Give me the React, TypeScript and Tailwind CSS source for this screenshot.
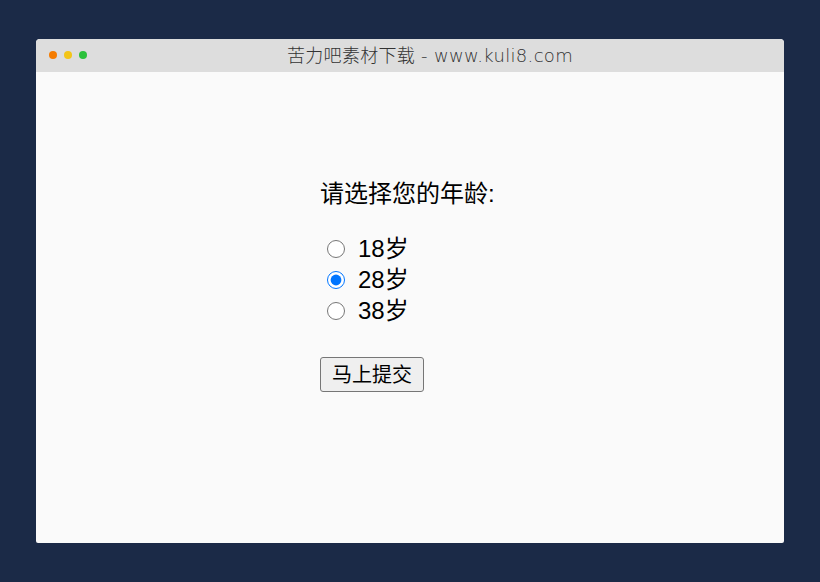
import { useState } from "react";

const ages = ["18岁", "28岁", "38岁"];

export default function App() {
  const [age, setAge] = useState("28岁");

  return (
    <div className="w-[820px] h-[582px] bg-[#1b2a47] pt-[39px] pl-[36px] font-['Liberation_Sans','Noto_Sans_CJK_SC',sans-serif]">
      <div className="w-[748px] h-[504px] bg-[#fafafa] rounded-t-[4px] rounded-b-[2px] overflow-hidden flex flex-col">
        <div className="h-[33px] bg-[#dddddd] flex items-center relative shrink-0">
          <div className="absolute left-[13px] top-[12px] flex gap-[7px]">
            <span className="w-[8px] h-[8px] rounded-full bg-[#f57c00]" />
            <span className="w-[8px] h-[8px] rounded-full bg-[#f3c518]" />
            <span className="w-[8px] h-[8px] rounded-full bg-[#2bc13b]" />
          </div>
          <div className="flex-1 text-center pl-[40px] text-[18px] tracking-[0.3px] font-extralight text-[#333] leading-none font-['DejaVu_Sans','Noto_Sans_CJK_SC',sans-serif]">
            苦力吧素材下载 - www.kuli8.com
          </div>
        </div>

        <div className="pt-[107px] pl-[284px] text-black">
          <form onSubmit={(e) => e.preventDefault()}>
            <div className="text-[24px] leading-[30px]">请选择您的年龄:</div>
            <div className="mt-[24px] flex flex-col">
              {ages.map((a) => (
                <label key={a} className="flex items-center h-[31px] text-[24px]">
                  <input
                    type="radio"
                    name="age"
                    checked={age === a}
                    onChange={() => setAge(a)}
                    className="w-[18px] h-[18px] ml-[7px] mr-[13px] accent-[#0075ff]"
                  />
                  {a}
                </label>
              ))}
            </div>
            <button
              type="submit"
              className="mt-[31px] w-[104px] h-[35px] bg-[#efefef] border border-[#767676] rounded-[3px] text-[20px] leading-none"
            >
              马上提交
            </button>
          </form>
        </div>
      </div>
    </div>
  );
}
